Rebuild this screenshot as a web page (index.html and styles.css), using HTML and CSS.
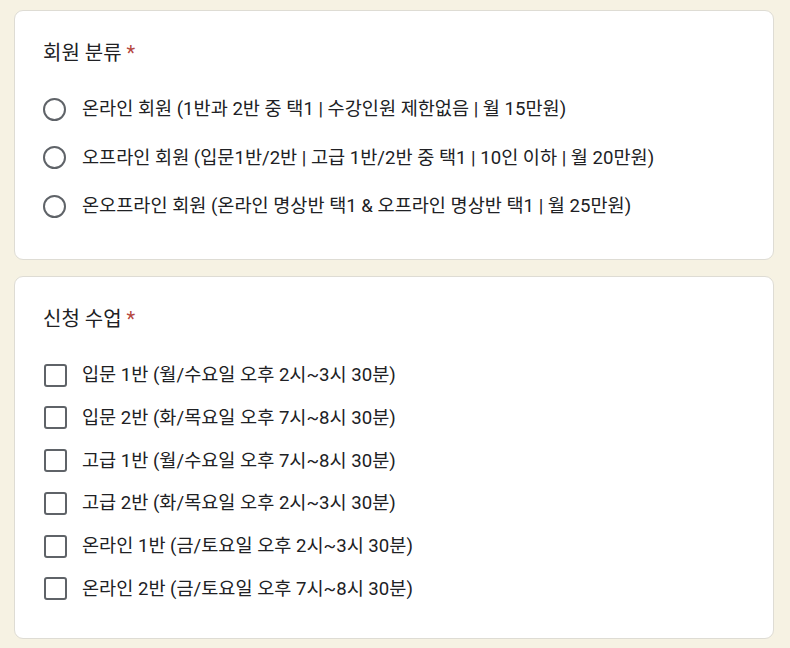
FILE: index.html
```html
<!DOCTYPE html>
<html lang="ko">
<head>
<meta charset="utf-8">
<link rel="stylesheet" href="styles.css">
</head>
<body>
<div class="page">
  <section class="card card-radio">
    <div class="title">회원 분류 <span class="req">*</span></div>
    <div class="options radios">
      <div class="opt"><span class="radio"></span><span class="label">온라인 회원 (1반과 2반 중 택1 | 수강인원 제한없음 | 월 15만원)</span></div>
      <div class="opt"><span class="radio"></span><span class="label">오프라인 회원 (입문1반/2반 | 고급 1반/2반 중 택1 | 10인 이하 | 월 20만원)</span></div>
      <div class="opt"><span class="radio"></span><span class="label">온오프라인 회원 (온라인 명상반 택1 &amp; 오프라인 명상반 택1 | 월 25만원)</span></div>
    </div>
  </section>
  <section class="card card-check">
    <div class="title">신청 수업 <span class="req">*</span></div>
    <div class="options checks">
      <div class="opt"><span class="check"></span><span class="label">입문 1반 (월/수요일 오후 2시~3시 30분)</span></div>
      <div class="opt"><span class="check"></span><span class="label">입문 2반 (화/목요일 오후 7시~8시 30분)</span></div>
      <div class="opt"><span class="check"></span><span class="label">고급 1반 (월/수요일 오후 7시~8시 30분)</span></div>
      <div class="opt"><span class="check"></span><span class="label">고급 2반 (화/목요일 오후 2시~3시 30분)</span></div>
      <div class="opt"><span class="check"></span><span class="label">온라인 1반 (금/토요일 오후 2시~3시 30분)</span></div>
      <div class="opt"><span class="check"></span><span class="label">온라인 2반 (금/토요일 오후 7시~8시 30분)</span></div>
    </div>
  </section>
</div>
</body>
</html>
```
FILE: styles.css
```css
html, body {
  margin: 0;
  padding: 0;
  background: #f6f2e3;
}
body {
  font-family: Roboto, "Noto Sans CJK KR", sans-serif;
  color: #202124;
  width: 790px;
  height: 648px;
  overflow: hidden;
}
.page {
  padding: 10px 16px 0 14px;
  display: flex;
  flex-direction: column;
  gap: 16px;
}
.card {
  background: #fff;
  border: 1px solid #dedcd4;
  border-radius: 9px;
  padding: 0 28px;
  box-sizing: border-box;
}
.card-radio {
  height: 250px;
}
.card-check {
  height: 363px;
}
.title {
  font-size: 20px;
  line-height: 28px;
  padding-top: 28px;
}
.req {
  color: #b5473f;
}
.options {
  display: flex;
  flex-direction: column;
}
.radios {
  margin-top: 28px;
  gap: 20.5px;
}
.checks {
  margin-top: 28px;
  gap: 14.8px;
}
.opt {
  display: flex;
  align-items: center;
  gap: 16px;
  height: 28px;
  font-size: 18.6px;
}
.radio {
  width: 23px;
  height: 23px;
  border: 2.5px solid #5f6368;
  border-radius: 50%;
  box-sizing: border-box;
  flex: none;
}
.check {
  width: 23px;
  height: 23px;
  border: 2.5px solid #5f6368;
  border-radius: 3px;
  box-sizing: border-box;
  margin-left: 1px;
  margin-right: -1px;
  flex: none;
}
.label {
  line-height: 28px;
  white-space: nowrap;
}
```
